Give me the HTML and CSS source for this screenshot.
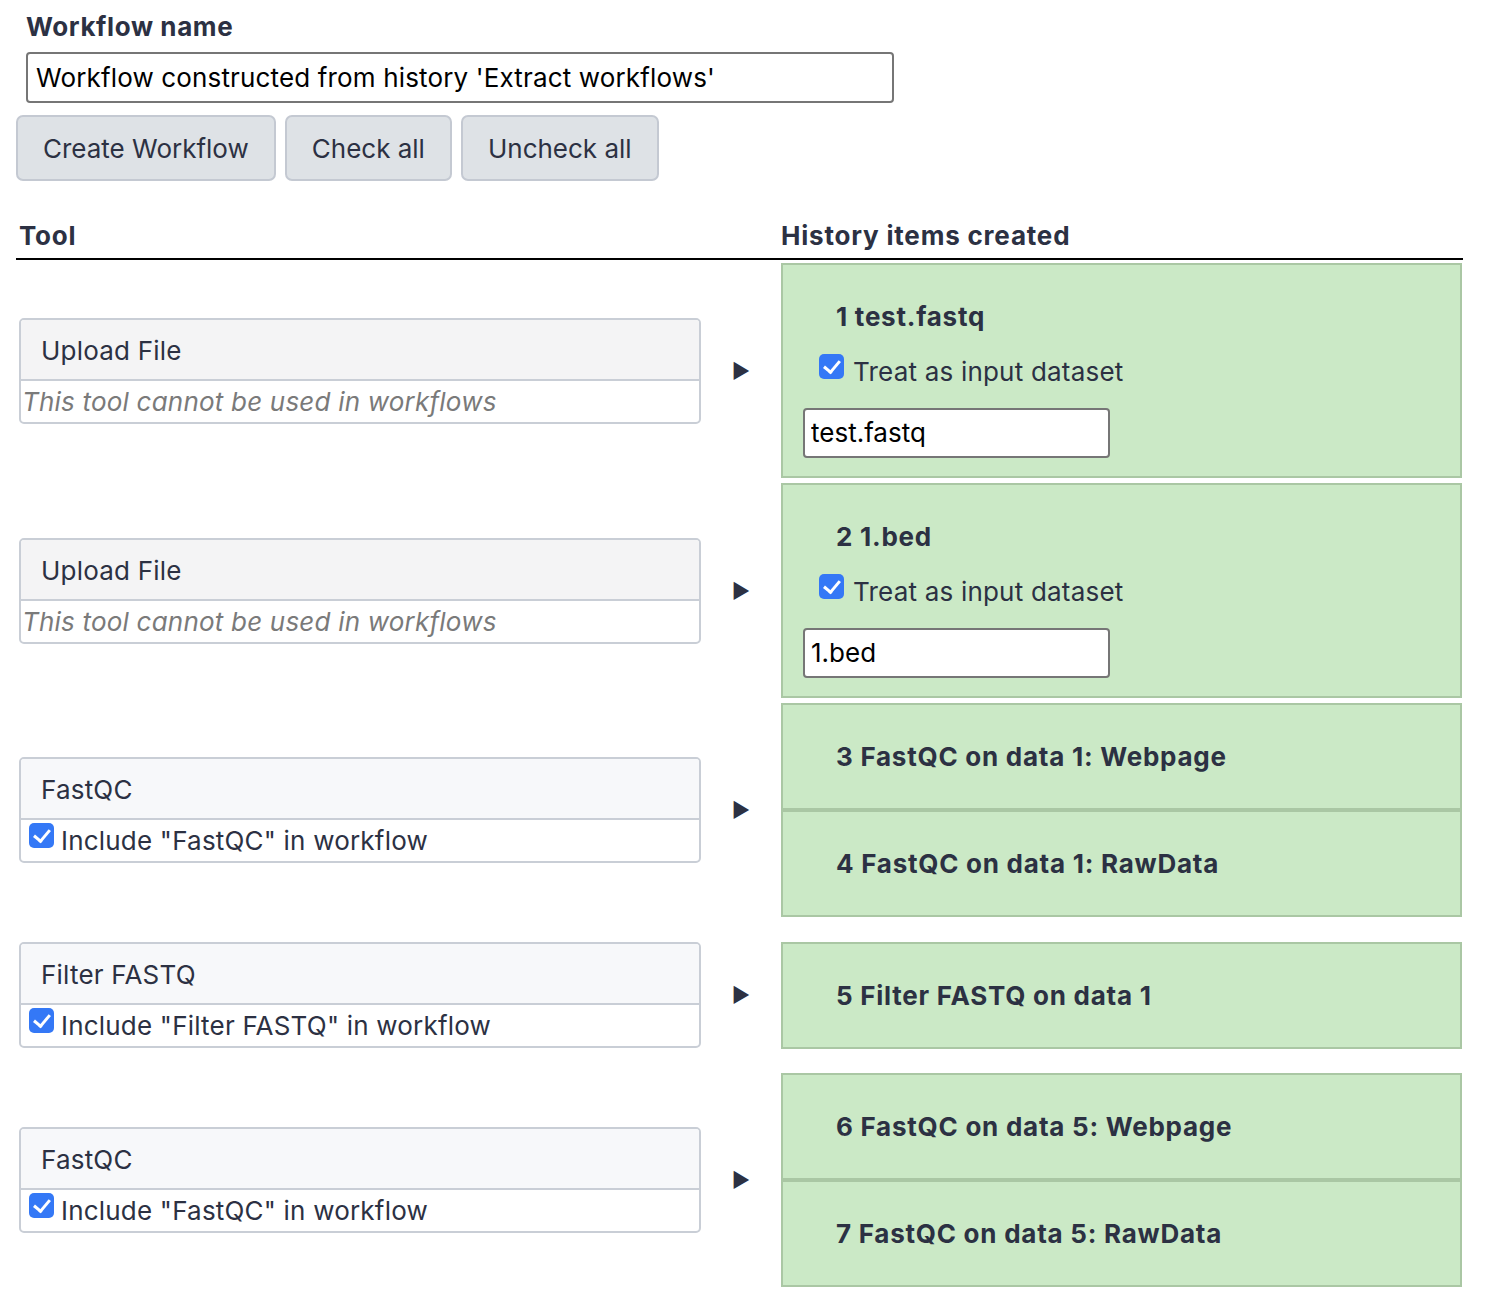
FILE: index.html
```
<!DOCTYPE html>
<html>
<head>
<meta charset="utf-8">
<link rel="stylesheet" href="styles.css">
</head>
<body>
<div class="page">
  <form class="wf-form">
    <div class="name-block">
      <label class="name-label">Workflow name</label>
      <input class="name-input" type="text" value="Workflow constructed from history 'Extract workflows'">
    </div>
    <div class="btns">
      <button type="button" class="btn">Create Workflow</button>
      <button type="button" class="btn">Check all</button>
      <button type="button" class="btn">Uncheck all</button>
    </div>
  </form>

  <div class="table">
    <div class="thead">
      <div class="th">Tool</div>
      <div class="th"></div>
      <div class="th">History items created</div>
    </div>

    <div class="row">
      <div class="cell-tool">
        <div class="card">
          <div class="card-title upload">Upload File</div>
          <div class="card-body disabled">This tool cannot be used in workflows</div>
        </div>
      </div>
      <div class="cell-arrow"><span class="arrow">&#9654;</span></div>
      <div class="cell-items">
        <div class="item input-item">
          <div class="item-title">1 test.fastq</div>
          <label class="item-check"><span class="cb"></span>Treat as input dataset</label>
          <input class="item-input" type="text" value="test.fastq">
        </div>
      </div>
    </div>

    <div class="row">
      <div class="cell-tool">
        <div class="card">
          <div class="card-title upload">Upload File</div>
          <div class="card-body disabled">This tool cannot be used in workflows</div>
        </div>
      </div>
      <div class="cell-arrow"><span class="arrow">&#9654;</span></div>
      <div class="cell-items">
        <div class="item input-item">
          <div class="item-title">2 1.bed</div>
          <label class="item-check"><span class="cb"></span>Treat as input dataset</label>
          <input class="item-input" type="text" value="1.bed">
        </div>
      </div>
    </div>

    <div class="row">
      <div class="cell-tool">
        <div class="card">
          <div class="card-title">FastQC</div>
          <label class="card-body include"><span class="cb"></span>Include "FastQC" in workflow</label>
        </div>
      </div>
      <div class="cell-arrow"><span class="arrow">&#9654;</span></div>
      <div class="cell-items">
        <div class="item"><div class="item-title">3 FastQC on data 1: Webpage</div></div>
        <div class="item"><div class="item-title">4 FastQC on data 1: RawData</div></div>
      </div>
    </div>

    <div class="row">
      <div class="cell-tool">
        <div class="card">
          <div class="card-title">Filter FASTQ</div>
          <label class="card-body include"><span class="cb"></span>Include "Filter FASTQ" in workflow</label>
        </div>
      </div>
      <div class="cell-arrow"><span class="arrow">&#9654;</span></div>
      <div class="cell-items">
        <div class="item"><div class="item-title">5 Filter FASTQ on data 1</div></div>
      </div>
    </div>

    <div class="row">
      <div class="cell-tool">
        <div class="card">
          <div class="card-title">FastQC</div>
          <label class="card-body include"><span class="cb"></span>Include "FastQC" in workflow</label>
        </div>
      </div>
      <div class="cell-arrow"><span class="arrow">&#9654;</span></div>
      <div class="cell-items">
        <div class="item"><div class="item-title">6 FastQC on data 5: Webpage</div></div>
        <div class="item"><div class="item-title">7 FastQC on data 5: RawData</div></div>
      </div>
    </div>
  </div>
</div>
</body>
</html>
```
FILE: styles.css
```
* { box-sizing: border-box; }
html, body { margin: 0; padding: 0; background: #fff; }
body {
  font-family: Inter, "Noto Sans", "Liberation Sans", sans-serif;
  color: #2c3143;
  font-size: 26px;
  letter-spacing: 0.2px;
}
.page { padding: 0 0 0 16px; width: 1465px; }

.wf-form { display: flex; flex-direction: column; }
.name-block { padding: 7px 0 0 10px; display: flex; flex-direction: column; }
.name-label { font-weight: 700; line-height: 39px; letter-spacing: 0.6px; }
.name-input {
  margin-top: 6px;
  width: 868px;
  height: 51px;
  border: 2px solid #767676;
  border-radius: 4px;
  padding: 0 8px;
  font: inherit;
  font-size: 26px;
  letter-spacing: 0.15px;
  color: #000;
  background: #fff;
}
.btns { display: flex; gap: 9px; margin-top: 12px; }
.btn {
  height: 66px;
  padding: 0 25px;
  font: inherit;
  font-size: 26px;
  letter-spacing: 0;
  color: #2c3143;
  background: #dee2e6;
  border: 2px solid #c4c9d2;
  border-radius: 7px;
}

.table { margin-top: 31px; display: flex; flex-direction: column; width: 1447px; }
.thead, .row {
  display: grid;
  grid-template-columns: 688px 74px 1fr;
}
.thead { border-bottom: 2px solid #000; }
.th { padding: 4px 3px 3px; font-weight: 700; line-height: 39px; letter-spacing: 0.8px; }
.row { align-items: center; padding: 2px 0 1px; }
.row > div { padding: 1px 3px; }
.row > .cell-items { padding-right: 1px; }

.cell-tool { display: flex; }
.card {
  width: 682px;
  margin: 20px 0;
  border: 2px solid #c9ced6;
  border-radius: 5px;
  overflow: hidden;
  background: #fff;
}
.card-title {
  height: 61px;
  line-height: 61px;
  padding-left: 20px;
  background: #f7f8fa;
  border-bottom: 2px solid #c9ced6;
}
.card-title.upload { background: #f4f4f5; }
.card-body {
  display: flex;
  align-items: center;
  height: 41px;
  line-height: 41px;
}
.card-body.disabled {
  padding-left: 1px;
  font-style: italic;
  color: #7a7a7a;
}
.card-body.include { padding-left: 8px; }
.card-body.include .cb { margin-right: 7px; margin-top: -10px; }

.cell-arrow { display: flex; justify-content: center; }
.arrow { font-size: 20px; line-height: 20px; color: #2c3143; }

.cell-items { display: flex; flex-direction: column; }
.item {
  height: 107px;
  background: #cbe9c6;
  border: 2px solid #aac7a4;
  padding: 18px 20px 16px;
  display: flex;
  flex-direction: column;
  align-items: flex-start;
}
.item.input-item { height: 215px; padding-bottom: 18px; }
.item-title {
  font-weight: 700;
  line-height: 39px;
  letter-spacing: 0.75px;
  margin: 14px 0 16px 33px;
}
.item-check {
  display: flex;
  align-items: center;
  height: 40px;
  margin-left: 16px;
}
.item-check .cb { margin-right: 9px; margin-top: -10px; }
.item-input {
  margin-top: 17px;
  width: 307px;
  height: 52px;
  border: 2px solid #767676;
  border-radius: 4px;
  padding: 0 6px;
  font: inherit;
  font-size: 26px;
  color: #000;
  background: #fff;
}

.cb {
  flex: none;
  display: inline-block;
  position: relative;
  width: 25px;
  height: 25px;
  border-radius: 5px;
  background: #3478f6;
}
.cb::after {
  content: "";
  position: absolute;
  left: 8px;
  top: 3px;
  width: 7px;
  height: 13px;
  border: solid #fff;
  border-width: 0 3px 3px 0;
  transform: rotate(40deg);
}
```
